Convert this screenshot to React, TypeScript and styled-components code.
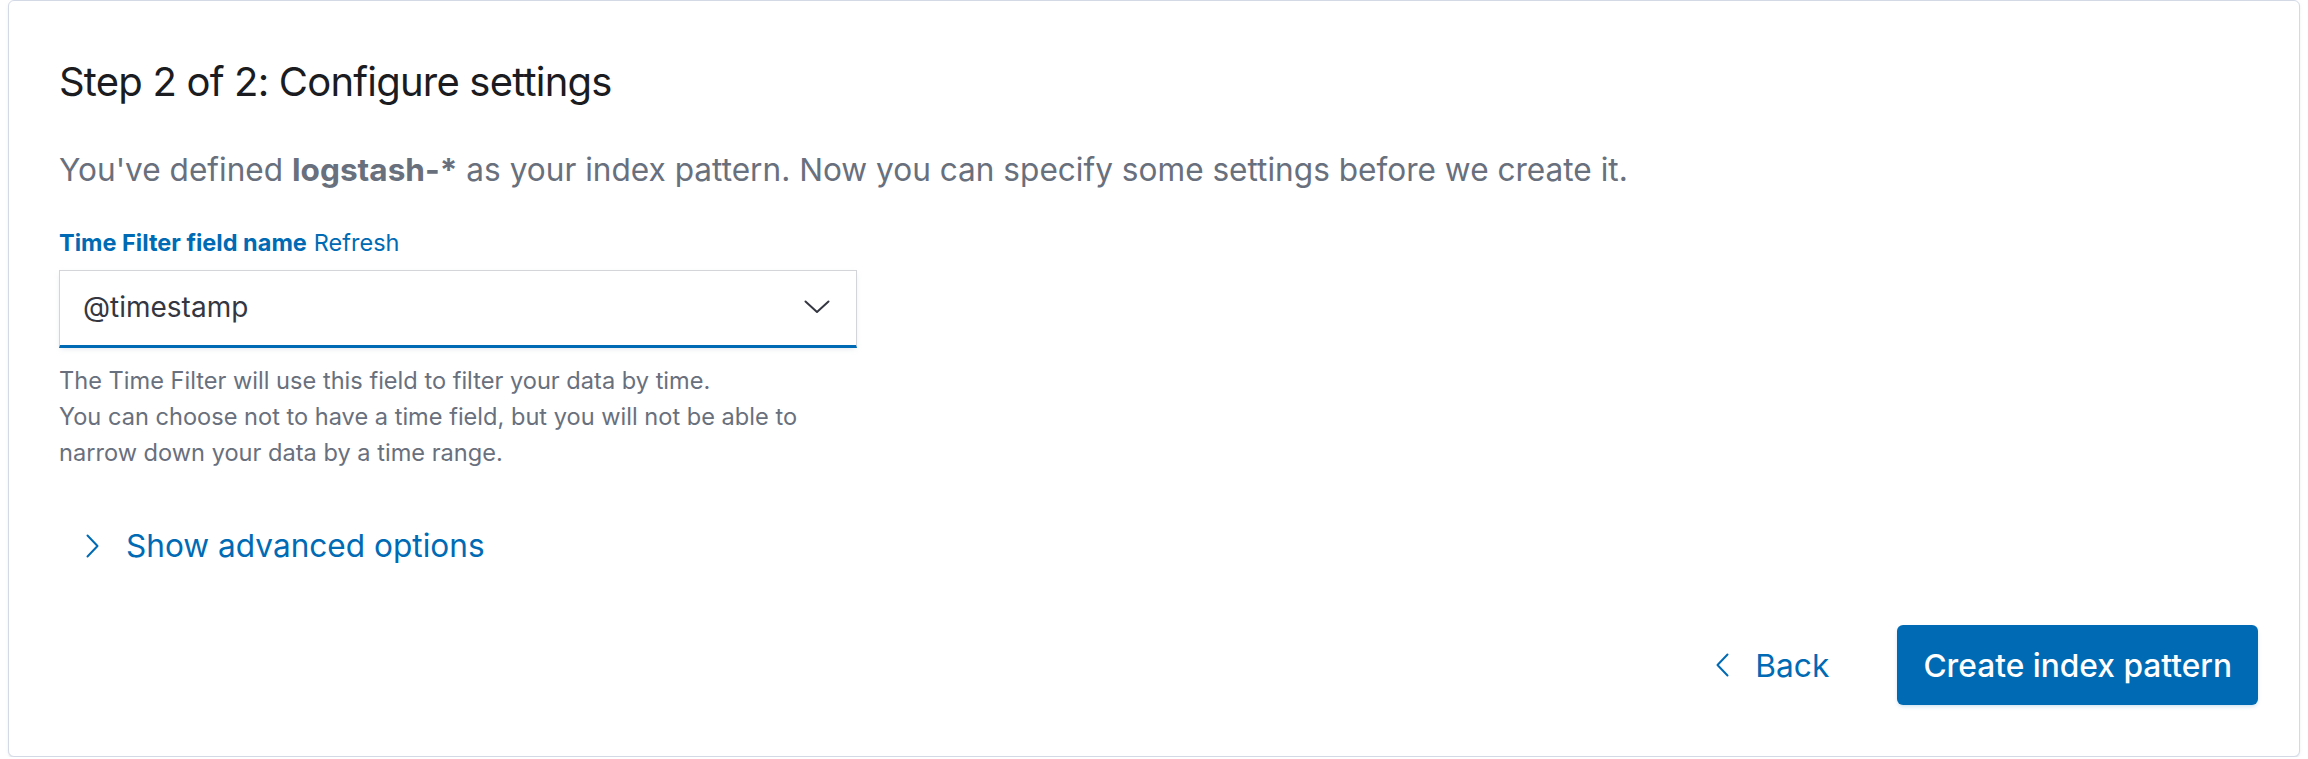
import React from 'react';
import styled, { createGlobalStyle } from 'styled-components';

const GlobalStyle = createGlobalStyle`
  html, body {
    margin: 0;
    padding: 0;
    background: #ffffff;
  }
  body {
    font-family: Inter, "Noto Sans", "Liberation Sans", sans-serif;
    -webkit-font-smoothing: antialiased;
  }
`;

const Page = styled.div`
  padding: 0 8px;
`;

const Panel = styled.section`
  display: flex;
  flex-direction: column;
  padding: 57px 41px 51px 50px;
  background: #ffffff;
  border: 1px solid #d3dae6;
  border-radius: 6px;
  box-shadow: 0 2px 2px -1px rgba(152, 162, 179, 0.3), 0 1px 5px -2px rgba(152, 162, 179, 0.3);
`;

const Title = styled.h2`
  margin: 0;
  font-size: 40px;
  line-height: 48px;
  font-weight: 400;
  letter-spacing: -0.02em;
  color: #1a1c21;
`;

const Description = styled.p`
  margin: 44px 0 0;
  font-size: 31.6px;
  line-height: 40px;
  color: #69707d;

  strong {
    font-weight: 700;
  }
`;

const FormRow = styled.div`
  display: flex;
  flex-direction: column;
  width: 798px;
  margin-top: 39px;
`;

const LabelRow = styled.div`
  display: flex;
  align-items: baseline;
  gap: 7px;
  font-size: 23.5px;
  line-height: 28px;
  color: #006bb4;
`;

const Label = styled.label`
  font-weight: 700;
`;

const LinkText = styled.span`
  color: #006bb4;
  cursor: pointer;
`;

const SelectBox = styled.div`
  display: flex;
  align-items: center;
  justify-content: space-between;
  box-sizing: border-box;
  height: 78px;
  margin-top: 13px;
  padding: 0 26px 3px 23px;
  background: #ffffff;
  border: 1px solid #d3d5d9;
  border-bottom: 3px solid #006bb4;
  box-shadow: 0 2px 6px -2px rgba(152, 162, 179, 0.35);
  font-size: 28px;
  color: #343741;
`;

const HelpText = styled.div`
  margin-top: 15px;
  font-size: 23.6px;
  line-height: 36px;
  color: #69707d;
`;

const ToggleButton = styled.button`
  display: flex;
  align-items: center;
  gap: 27px;
  margin: 55px 0 0 27px;
  padding: 0;
  background: none;
  border: none;
  font-family: inherit;
  font-size: 31.6px;
  line-height: 40px;
  color: #006bb4;
  cursor: pointer;
  align-self: flex-start;
`;

const Footer = styled.div`
  display: flex;
  justify-content: flex-end;
  align-items: center;
  gap: 68px;
  margin-top: 59px;
`;

const BackButton = styled.button`
  display: flex;
  align-items: center;
  gap: 26px;
  padding: 0;
  background: none;
  border: none;
  font-family: inherit;
  font-size: 31.7px;
  color: #006bb4;
  cursor: pointer;
`;

const PrimaryButton = styled.button`
  height: 80px;
  padding: 0 26px;
  background: #006bb4;
  border: none;
  border-radius: 6px;
  box-shadow: 0 2px 4px -1px rgba(0, 107, 180, 0.25);
  font-family: inherit;
  font-size: 31.7px;
  font-weight: 500;
  color: #ffffff;
  cursor: pointer;
`;

const Chevron: React.FC<{ dir: 'down' | 'left' | 'right'; color: string }> = ({ dir, color }) => {
  if (dir === 'down') {
    return (
      <svg width="26" height="14" viewBox="0 0 26 14" fill="none">
        <polyline points="1.5,1.5 13,12 24.5,1.5" stroke={color} strokeWidth="2" strokeLinecap="round" strokeLinejoin="round" />
      </svg>
    );
  }
  const pts = dir === 'right' ? '1.5,1.5 11.5,12 1.5,22.5' : '11.5,1.5 1.5,12 11.5,22.5';
  return (
    <svg width="13" height="24" viewBox="0 0 13 24" fill="none">
      <polyline points={pts} stroke={color} strokeWidth="2" strokeLinecap="round" strokeLinejoin="round" />
    </svg>
  );
};

const App: React.FC = () => {
  return (
    <Page>
      <GlobalStyle />
      <Panel>
        <Title>Step 2 of 2: Configure settings</Title>
        <Description>
          You've defined <strong>logstash-*</strong> as your index pattern. Now you can specify some settings before we create it.
        </Description>
        <FormRow>
          <LabelRow>
            <Label>Time Filter field name</Label>
            <LinkText>Refresh</LinkText>
          </LabelRow>
          <SelectBox>
            <span>@timestamp</span>
            <Chevron dir="down" color="#343741" />
          </SelectBox>
          <HelpText>
            The Time Filter will use this field to filter your data by time.
            <br />
            You can choose not to have a time field, but you will not be able to narrow down your data by a time range.
          </HelpText>
        </FormRow>
        <ToggleButton>
          <Chevron dir="right" color="#006bb4" />
          <span>Show advanced options</span>
        </ToggleButton>
        <Footer>
          <BackButton>
            <Chevron dir="left" color="#006bb4" />
            <span>Back</span>
          </BackButton>
          <PrimaryButton>Create index pattern</PrimaryButton>
        </Footer>
      </Panel>
    </Page>
  );
};

export default App;
